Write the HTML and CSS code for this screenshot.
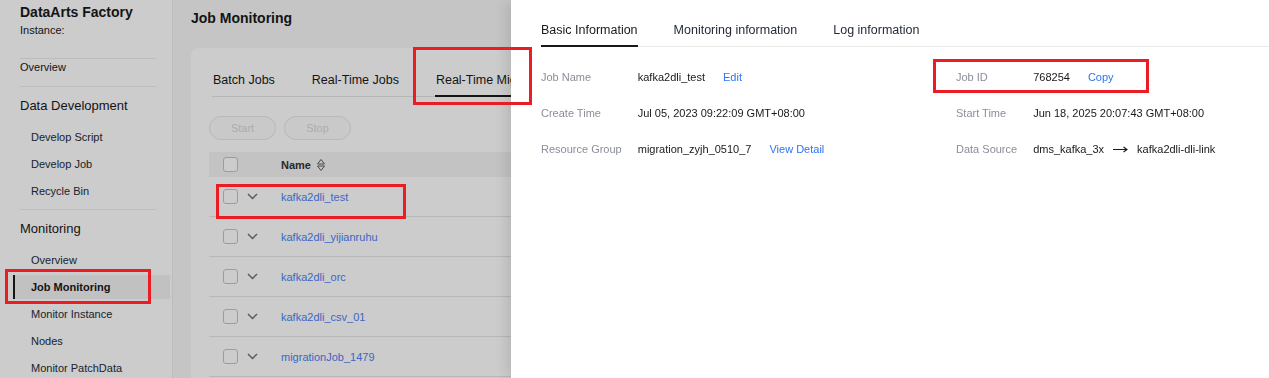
FILE: index.html
```html
<!DOCTYPE html>
<html lang="en">
<head>
  <meta charset="UTF-8" />
  <meta name="viewport" content="width=device-width, initial-scale=1.0"/>
  <title>Job Monitoring</title>
  <link rel="stylesheet" href="styles.css">
</head>
<body>

  <aside class="sidebar">
    <div class="brand">
      <div class="brand-name">DataArts Factory</div>
      <div class="brand-instance">Instance:</div>
    </div>
    <div class="divider first"></div>
    <div class="nav-top">Overview</div>
    <div class="divider"></div>

    <div class="nav-title">Data Development</div>
    <div class="nav-item">Develop Script</div>
    <div class="nav-item">Develop Job</div>
    <div class="nav-item">Recycle Bin</div>
    <div class="divider gap"></div>

    <div class="nav-title">Monitoring</div>
    <div class="nav-item">Overview</div>
    <div class="nav-item active">Job Monitoring</div>
    <div class="nav-item">Monitor Instance</div>
    <div class="nav-item">Nodes</div>
    <div class="nav-item">Monitor PatchData</div>
  </aside>

  <main class="main">
    <h1 class="page-title">Job Monitoring</h1>

    <section class="card">
      <div class="tabs">
        <span class="tab">Batch Jobs</span>
        <span class="tab">Real-Time Jobs</span>
        <span class="tab active">Real-Time Migration Jobs</span>
      </div>

      <div class="toolbar">
        <button class="btn" disabled>Start</button>
        <button class="btn" disabled>Stop</button>
      </div>

      <div class="table">
        <div class="row head">
          <span class="check"></span>
          <span class="col-name">Name</span>
          <svg class="sort" width="10" height="14" viewBox="0 0 10 14">
            <path d="M1.5 6 L5 1.5 L8.5 6 Z M1.5 8 L5 12.5 L8.5 8 Z" fill="none" stroke="#5c5c5c" stroke-width="1" stroke-linejoin="round"/>
          </svg>
        </div>
        <div class="row">
          <span class="check"></span>
          <svg class="expand" width="11" height="7" viewBox="0 0 11 7"><path d="M1 1 L5.5 5.5 L10 1" fill="none" stroke="#6e6e6e" stroke-width="1.4"/></svg>
          <a class="job-link">kafka2dli_test</a>
        </div>
        <div class="row">
          <span class="check"></span>
          <svg class="expand" width="11" height="7" viewBox="0 0 11 7"><path d="M1 1 L5.5 5.5 L10 1" fill="none" stroke="#6e6e6e" stroke-width="1.4"/></svg>
          <a class="job-link">kafka2dli_yijianruhu</a>
        </div>
        <div class="row">
          <span class="check"></span>
          <svg class="expand" width="11" height="7" viewBox="0 0 11 7"><path d="M1 1 L5.5 5.5 L10 1" fill="none" stroke="#6e6e6e" stroke-width="1.4"/></svg>
          <a class="job-link">kafka2dli_orc</a>
        </div>
        <div class="row">
          <span class="check"></span>
          <svg class="expand" width="11" height="7" viewBox="0 0 11 7"><path d="M1 1 L5.5 5.5 L10 1" fill="none" stroke="#6e6e6e" stroke-width="1.4"/></svg>
          <a class="job-link">kafka2dli_csv_01</a>
        </div>
        <div class="row">
          <span class="check"></span>
          <svg class="expand" width="11" height="7" viewBox="0 0 11 7"><path d="M1 1 L5.5 5.5 L10 1" fill="none" stroke="#6e6e6e" stroke-width="1.4"/></svg>
          <a class="job-link">migrationJob_1479</a>
        </div>
      </div>
    </section>
  </main>

  <div class="mask"></div>

  <!-- Job detail drawer -->
  <aside class="drawer">
    <div class="drawer-tabs">
      <span class="dtab active">Basic Information</span>
      <span class="dtab">Monitoring information</span>
      <span class="dtab">Log information</span>
    </div>

    <div class="info">
      <div class="info-col">
        <span class="label">Job Name</span>
        <span class="value">kafka2dli_test <a class="link">Edit</a></span>
        <span class="label">Create Time</span>
        <span class="value">Jul 05, 2023 09:22:09 GMT+08:00</span>
        <span class="label">Resource Group</span>
        <span class="value">migration_zyjh_0510_7 <a class="link">View Detail</a></span>
      </div>
      <div class="info-col">
        <span class="label">Job ID</span>
        <span class="value">768254 <a class="link">Copy</a></span>
        <span class="label">Start Time</span>
        <span class="value">Jun 18, 2025 20:07:43 GMT+08:00</span>
        <span class="label">Data Source</span>
        <span class="value">dms_kafka_3x
          <svg class="arrow" width="15" height="8" viewBox="0 0 15 8"><path d="M0 4.5 H13.5 M10.5 2 L14 4.5 L10.5 7" fill="none" stroke="#191919" stroke-width="1.1"/></svg>
          kafka2dli-dli-link</span>
      </div>
    </div>
  </aside>

  <!-- Annotation frames -->
  <div class="mark mark-nav"></div>
  <div class="mark mark-tab"></div>
  <div class="mark mark-row"></div>
  <div class="mark mark-id"></div>

</body>
</html>
```

FILE: styles.css
```css
* {
  box-sizing: border-box;
}

body {
  margin: 0;
  height: 378px;
  overflow: hidden;
  display: flex;
  font-family: "Liberation Sans", Arial, sans-serif;
  color: #191919;
  background: #f7f7f7;
}

/* Sidebar */
.sidebar {
  width: 173px;
  flex-shrink: 0;
  display: flex;
  flex-direction: column;
  background: #fff;
  border-right: 1px solid #ececec;
}

.brand {
  padding: 3px 0 0 20px;
}

.brand-name {
  font-size: 14px;
  font-weight: bold;
  line-height: 18px;
}

.brand-instance {
  margin-top: 1px;
  font-size: 11px;
  line-height: 16px;
}

.divider {
  flex-shrink: 0;
  height: 1px;
  margin: 0 16px 0 20px;
  background: #ececec;
}

.divider.first {
  margin-top: 20px;
}

.divider.gap {
  margin-top: 4px;
}

.nav-top {
  padding-left: 20px;
  font-size: 11px;
  line-height: 16px;
  margin-bottom: 11px;
}

.nav-title {
  padding: 9px 0 8px 20px;
  font-size: 13px;
  line-height: 20px;
}

.nav-item {
  margin: 1px 2px 2px 13px;
  padding-left: 16px;
  border-left: 2px solid transparent;
  font-size: 11px;
  line-height: 24px;
  color: #252b3a;
}

.nav-item.active {
  background: #f2f2f2;
  border-left-color: #191919;
  font-weight: bold;
  color: #191919;
}

/* Main area */
.main {
  flex: 1;
  padding: 8px 18px 0;
}

.page-title {
  margin: 0;
  font-size: 14px;
  line-height: 20px;
}

.card {
  margin-top: 20px;
  height: 340px;
  padding: 22px 0 0 18px;
  background: #fff;
  border-radius: 8px;
}

.tabs {
  display: flex;
  gap: 36px;
  margin-left: 3px;
  border-bottom: 1px solid #e4e4e4;
}

.tab {
  padding: 0 0 5px 1px;
  margin-bottom: -1px;
  font-size: 12.5px;
  line-height: 20px;
  border-bottom: 2px solid transparent;
}

.tab.active {
  border-bottom-color: #191919;
}

.toolbar {
  display: flex;
  gap: 8px;
  margin-top: 19px;
}

.btn {
  width: 67px;
  height: 24px;
  padding: 0;
  border: 1px solid #e8e8e8;
  border-radius: 12px;
  background: #fcfcfc;
  color: #d8d8d8;
  font-family: inherit;
  font-size: 11px;
}

.table {
  margin-top: 12px;
}

.row {
  display: flex;
  align-items: center;
  height: 40px;
  padding-left: 14px;
  border-bottom: 1px solid #e6e6e6;
}

.row.head {
  height: 25px;
  background: #f4f4f4;
  border-bottom: none;
}

.check {
  width: 15px;
  height: 15px;
  border: 1px solid #c4c4c4;
  border-radius: 3px;
  background: #fff;
}

.col-name {
  margin-left: 43px;
  font-size: 11px;
  font-weight: bold;
  color: #333;
}

.sort {
  margin-left: 5px;
}

.expand {
  margin-left: 9px;
}

.job-link {
  margin-left: 23px;
  font-size: 11px;
  color: #4d7ff5;
}

/* Overlay + drawer */
.mask {
  position: fixed;
  top: 0;
  left: 0;
  width: 100%;
  height: 100%;
  background: rgba(0, 0, 0, 0.2);
}

.drawer {
  position: fixed;
  top: 0;
  right: 0;
  bottom: 0;
  width: 758px;
  padding: 18px 0 0 30px;
  background: #fff;
  box-shadow: -4px 0 14px rgba(0, 0, 0, 0.12);
}

.drawer-tabs {
  display: flex;
  gap: 36px;
  border-bottom: 1px solid #ebebeb;
}

.dtab {
  padding-bottom: 3px;
  margin-bottom: -1px;
  font-size: 12.5px;
  line-height: 24px;
  color: #252b3a;
  border-bottom: 2px solid transparent;
}

.dtab.active {
  color: #191919;
  border-bottom-color: #191919;
}

.info {
  display: grid;
  grid-template-columns: 415px 1fr;
  margin-top: 12px;
}

.info-col {
  display: grid;
  grid-template-columns: max-content max-content;
  grid-auto-rows: 36px;
  align-items: center;
  column-gap: 16px;
  font-size: 11px;
}

.label {
  color: #8a8e99;
}

.value {
  display: flex;
  align-items: center;
  color: #191919;
}

.link {
  margin-left: 18px;
  color: #2b74f5;
}

.arrow {
  margin: 0 9px;
}

/* Red annotation frames */
.mark {
  position: fixed;
  border: 3px solid #ec1c24;
}

.mark-nav {
  left: 5px;
  top: 269px;
  width: 146px;
  height: 35px;
}

.mark-tab {
  left: 413px;
  top: 47px;
  width: 119px;
  height: 58px;
}

.mark-row {
  left: 216px;
  top: 184px;
  width: 190px;
  height: 35px;
}

.mark-id {
  left: 933px;
  top: 59px;
  width: 216px;
  height: 34px;
}
```
